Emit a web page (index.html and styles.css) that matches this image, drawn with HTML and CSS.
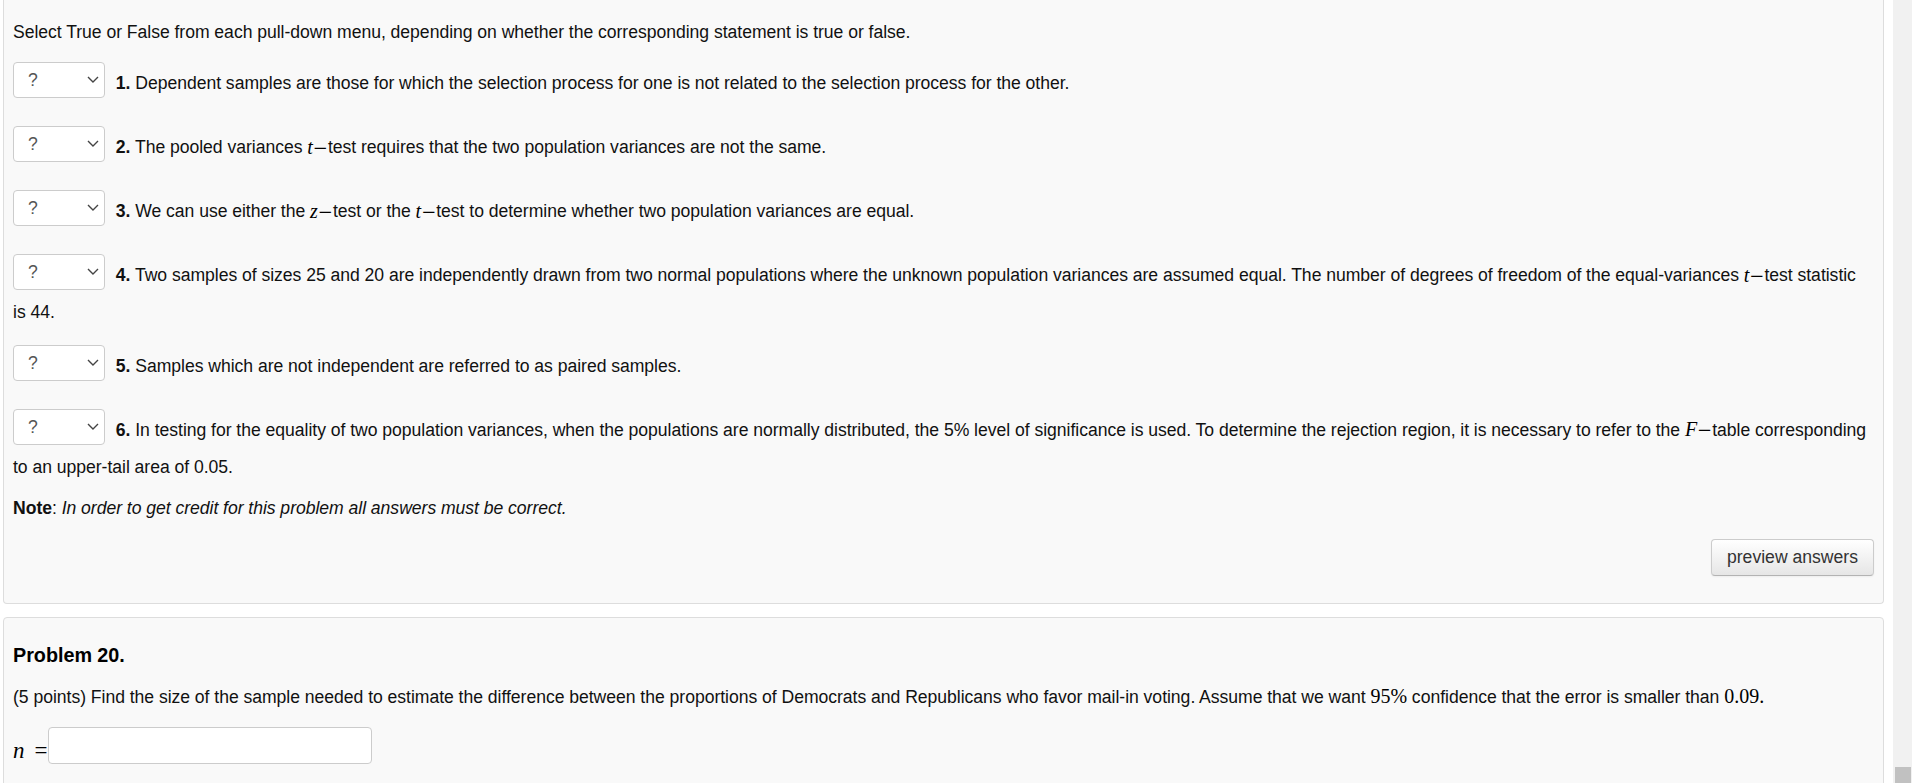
FILE: index.html
```html
<!DOCTYPE html>
<html lang="en">
<head>
<meta charset="utf-8">
<title>Problem 19 / Problem 20</title>
<link rel="stylesheet" href="styles.css">
</head>
<body>
<div class="viewport">
  <main class="page">
    <section class="panel problem-top">
      <p class="intro">Select True or False from each pull-down menu, depending on whether the corresponding statement is true or false.</p>
      <div class="stmts">
        <p class="stmt"><span class="pop"><select><option>?</option><option>True</option><option>False</option></select><svg class="chev" viewBox="0 0 12 7" width="12" height="7"><polyline points="1,1 6,6 11,1"/></svg></span> <b>1.</b> Dependent samples are those for which the selection process for one is not related to the selection process for the other.</p>
        <p class="stmt"><span class="pop"><select><option>?</option><option>True</option><option>False</option></select><svg class="chev" viewBox="0 0 12 7" width="12" height="7"><polyline points="1,1 6,6 11,1"/></svg></span> <b>2.</b> The pooled variances <span class="m"><i>t</i><span class="mo">−</span></span>test requires that the two population variances are not the same.</p>
        <p class="stmt"><span class="pop"><select><option>?</option><option>True</option><option>False</option></select><svg class="chev" viewBox="0 0 12 7" width="12" height="7"><polyline points="1,1 6,6 11,1"/></svg></span> <b>3.</b> We can use either the <span class="m"><i>z</i><span class="mo">−</span></span>test or the <span class="m"><i>t</i><span class="mo">−</span></span>test to determine whether two population variances are equal.</p>
        <p class="stmt"><span class="pop"><select><option>?</option><option>True</option><option>False</option></select><svg class="chev" viewBox="0 0 12 7" width="12" height="7"><polyline points="1,1 6,6 11,1"/></svg></span> <b>4.</b> Two samples of sizes 25 and 20 are independently drawn from two normal populations where the unknown population variances are assumed equal. The number of degrees of freedom of the equal-variances <span class="m"><i>t</i><span class="mo">−</span></span>test statistic<br>is 44.</p>
        <p class="stmt"><span class="pop"><select><option>?</option><option>True</option><option>False</option></select><svg class="chev" viewBox="0 0 12 7" width="12" height="7"><polyline points="1,1 6,6 11,1"/></svg></span> <b>5.</b> Samples which are not independent are referred to as paired samples.</p>
        <p class="stmt"><span class="pop"><select><option>?</option><option>True</option><option>False</option></select><svg class="chev" viewBox="0 0 12 7" width="12" height="7"><polyline points="1,1 6,6 11,1"/></svg></span> <b>6.</b> In testing for the equality of two population variances, when the populations are normally distributed, the 5% level of significance is used. To determine the rejection region, it is necessary to refer to the <span class="m"><i>F</i><span class="mo">−</span></span>table corresponding<br>to an upper-tail area of 0.05.</p>
      </div>
      <p class="note"><b>Note</b>: <i>In order to get credit for this problem all answers must be correct.</i></p>
      <div class="actions"><button class="btn" type="button">preview answers</button></div>
    </section>
    <section class="panel problem">
      <h3 class="problem-title">Problem 20.</h3>
      <p class="problem-text">(5 points) Find the size of the sample needed to estimate the difference between the proportions of Democrats and Republicans who favor mail-in voting. Assume that we want <span class="m num">95%</span> confidence that the error is smaller than <span class="m num">0.09.</span></p>
      <div class="answer"><span class="m ans-label"><i>n</i><span class="eq">=</span></span><input class="ans-input" type="text" aria-label="n"></div>
    </section>
  </main>
  <div class="scrollbar"><div class="thumb"></div></div>
</div>
</body>
</html>
```

FILE: styles.css
```css
html, body {
  margin: 0;
  padding: 0;
  height: 100%;
  overflow: hidden;
  background: #ffffff;
}

body {
  font-family: "Liberation Sans", Arial, sans-serif;
  font-size: 17.6px;
  line-height: 26.4px;
  color: #111111;
}

.viewport {
  display: flex;
  height: 783px;
}

.page {
  flex: 1;
  min-width: 0;
  padding: 0 9px 0 3px;
  overflow: hidden;
}

.scrollbar {
  width: 19px;
  background: #f1f1f1;
  display: flex;
  flex-direction: column;
  justify-content: flex-end;
}

.thumb {
  height: 16px;
  margin: 0 1px 0 2px;
  background: #c1c1c1;
}

.panel {
  background: #f9f9f9;
  border: 1px solid #dddddd;
  border-radius: 4px;
  padding: 0 9px;
  letter-spacing: -0.03px;
  word-spacing: -0.05px;
}

.problem-top {
  border-top: none;
  border-top-left-radius: 0;
  border-top-right-radius: 0;
  padding-top: 19px;
  padding-bottom: 27px;
}

.intro {
  margin: 0 0 17px;
}

.stmt {
  margin: 0;
}

.stmt + .stmt {
  margin-top: 19px;
}

.pop {
  display: inline-block;
  position: relative;
  vertical-align: middle;
  margin: 0 6px 9px 0;
  letter-spacing: 0;
}

.pop select {
  display: block;
  -webkit-appearance: none;
  appearance: none;
  box-sizing: border-box;
  width: 92px;
  height: 36px;
  margin: 0;
  padding: 0 0 0 14px;
  border: 1px solid #cccccc;
  border-radius: 4px;
  background: #ffffff;
  font-family: "Liberation Sans", Arial, sans-serif;
  font-size: 17.6px;
  color: #555555;
}

.chev {
  position: absolute;
  right: 6px;
  top: 14px;
  pointer-events: none;
}

.chev polyline {
  fill: none;
  stroke: #444444;
  stroke-width: 1.4;
}

.m {
  font-family: "Liberation Serif", "Times New Roman", serif;
  font-size: 20px;
  line-height: 0;
  letter-spacing: 0;
  color: #000000;
}

.m i {
  font-style: italic;
}

.mo {
  font-family: "DejaVu Serif", serif;
  font-size: 18px;
  margin: 0;
}

.note {
  margin: 15px 0 0;
}

.actions {
  display: flex;
  justify-content: flex-end;
  margin-top: 17px;
}

.btn {
  box-sizing: border-box;
  height: 37px;
  padding: 0 15px;
  font-family: "Liberation Sans", Arial, sans-serif;
  font-size: 17.6px;
  line-height: 35px;
  color: #333333;
  background: linear-gradient(#ffffff, #e6e6e6);
  border: 1px solid #cccccc;
  border-bottom-color: #b3b3b3;
  border-radius: 4px;
  box-shadow: inset 0 1px 0 rgba(255, 255, 255, 0.2), 0 1px 2px rgba(0, 0, 0, 0.05);
}

.problem {
  margin-top: 13px;
  padding-top: 24px;
  padding-bottom: 40px;
}

.problem-title {
  margin: 0 0 16px;
  font-size: 19.8px;
  line-height: 26.4px;
  font-weight: bold;
  color: #000000;
}

.problem-text {
  margin: 0;
}

.answer {
  display: flex;
  align-items: flex-end;
  margin-top: 17px;
}

.ans-label {
  line-height: 26.4px;
  font-size: 23px;
}

.ans-label .eq {
  margin-left: 10px;
  margin-right: 1px;
}

.ans-input {
  box-sizing: border-box;
  width: 324px;
  height: 37px;
  margin: 0;
  padding: 4px 6px;
  border: 1px solid #cccccc;
  border-radius: 4px;
  background: #ffffff;
  font-family: "Liberation Sans", Arial, sans-serif;
  font-size: 17.6px;
}
```
